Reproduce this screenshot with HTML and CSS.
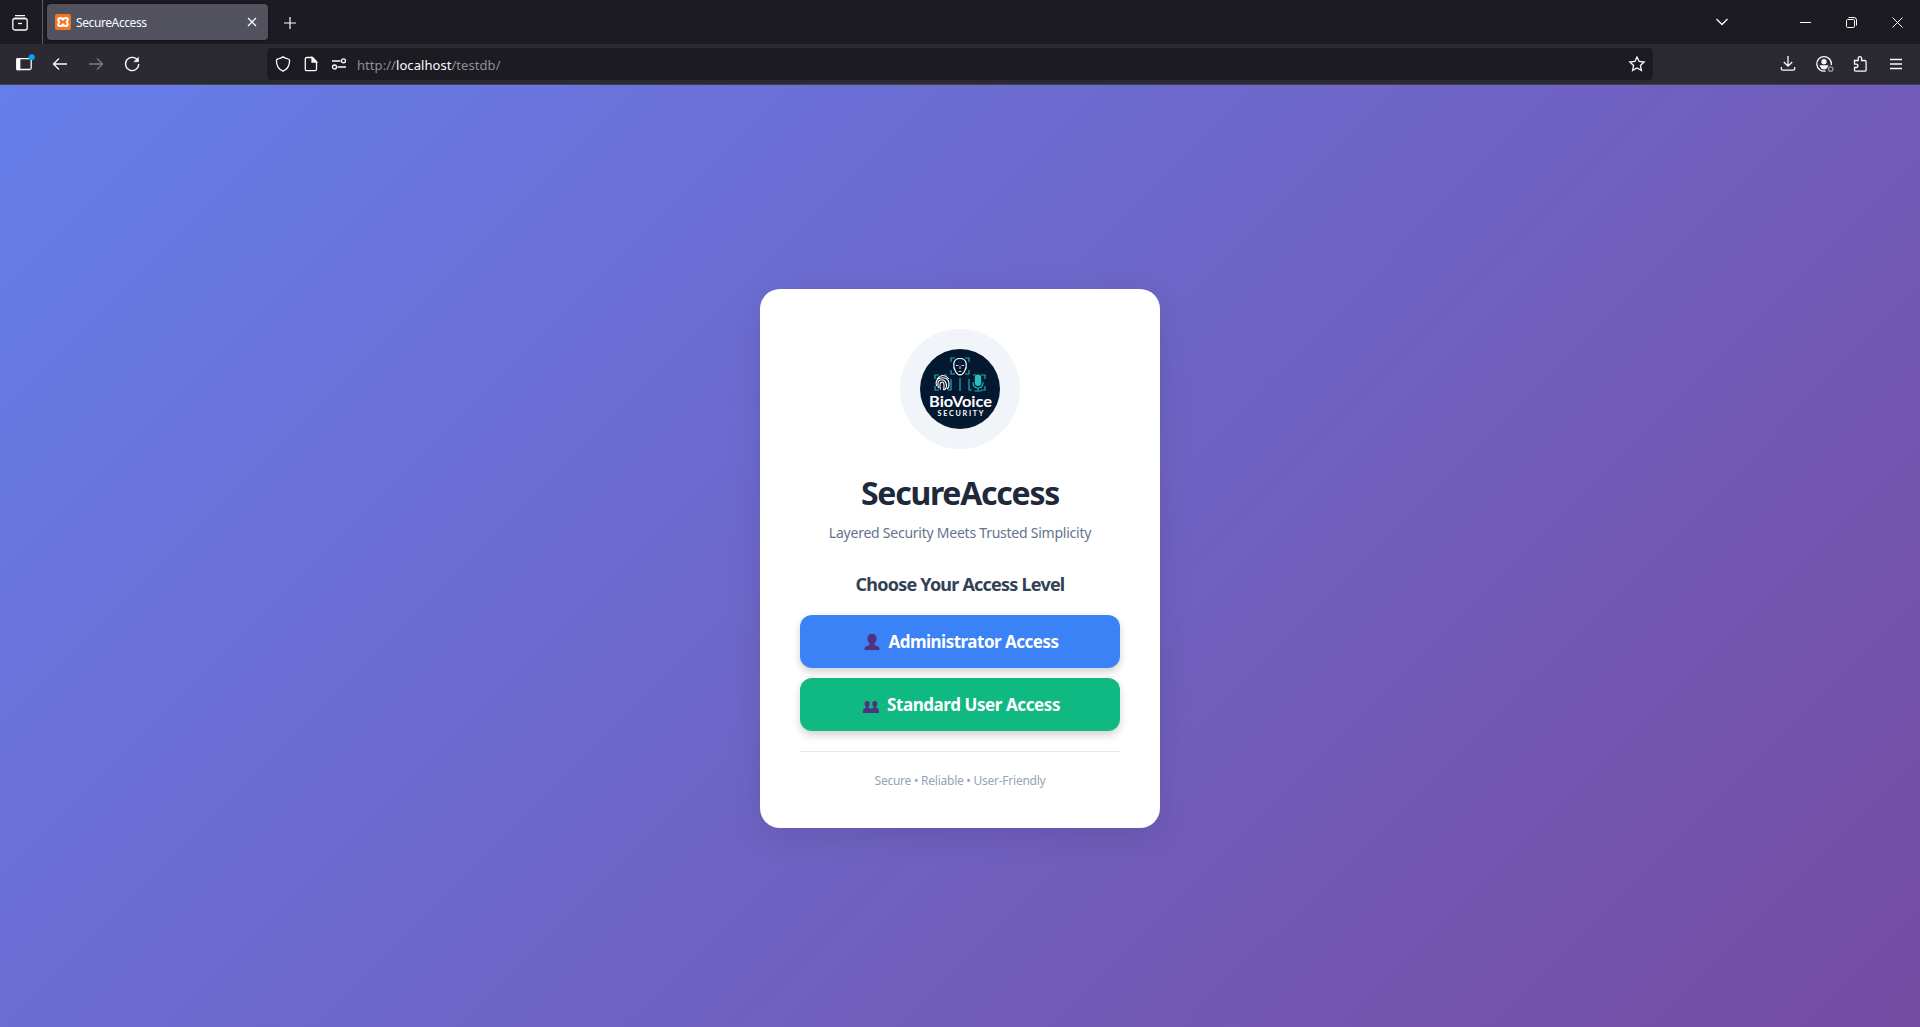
FILE: index.html
```html
<!DOCTYPE html>
<html lang="en">
<head>
<meta charset="utf-8">
<title>SecureAccess</title>
<link rel="stylesheet" href="styles.css">
</head>
<body>
<header class="browser">
  <div class="tabbar">
    <div class="view"><svg class="icon" viewBox="0 0 16 16"><path d="M3 .7h10M2.200 3.500h11.600"/><rect x=".8" y="3.500" width="14.400" height="11.500" rx="2"/><path d="M6 8.500h4"/></svg></div>
    <div class="tab">
      <svg class="favicon" viewBox="0 0 16 16"><rect width="16" height="16" rx="2" fill="#f37623"/><path d="M5.300 4Q8 4 8 6.500 8 4 10.700 4T12.700 6 11 8q1.700.2 1.700 2t-2 2Q8 12 8 9.500 8 12 5.300 12T3.300 10 5 8Q3.300 7.800 3.300 6t2-2z" fill="none" stroke="#fff" stroke-width="2.100"/></svg>
      <span class="tab-title">SecureAccess</span>
      <svg class="tab-close" viewBox="0 0 10 10"><path d="M1 1l8 8M9 1L1 9"/></svg>
    </div>
    <svg class="new-tab" viewBox="0 0 12 12"><path d="M6 0v12M0 6h12"/></svg>
    <div class="window-controls">
      <svg class="chevron" viewBox="0 0 12 8"><path d="M.5 1L6 6.500 11.500 1"/></svg>
      <svg class="minimize" viewBox="0 0 11 11"><path d="M0 5.500h11"/></svg>
      <svg class="restore" viewBox="0 0 11 11"><rect x=".5" y="2.500" width="8" height="8" rx="1"/><path d="M2.500.500H8q2.500 0 2.500 2.500v5.500"/></svg>
      <svg class="close" viewBox="0 0 11 11"><path d="M.5.500l10 10M10.500.500l-10 10"/></svg>
    </div>
  </div>
  <div class="toolbar">
    <div class="nav">
      <svg class="icon" viewBox="0 0 16 16"><rect x=".8" y="2.700" width="14.400" height="10.800" rx="1.500"/><path d="M1 3h2.700v10.500H1z" fill="currentColor"/><circle class="dot" cx="15.700" cy="1.200" r="3"/></svg>
      <svg class="icon" viewBox="0 0 16 16"><path d="M15 8H1.700M7 2.500L1.500 8 7 13.500"/></svg>
      <svg class="icon disabled" viewBox="0 0 16 16"><path d="M1 8h13.300M9 2.500L14.500 8 9 13.500"/></svg>
      <svg class="icon" viewBox="0 0 16 16"><path d="M14 5A6.600 6.600 0 1 0 14.700 8"/><path d="M14.500 1.200v4.600H9.800z" fill="currentColor" stroke-width=".5"/></svg>
    </div>
    <div class="address">
      <svg class="icon" viewBox="0 0 16 16"><path d="M8 .8q1 1 5.200 2.200 1.400.4 1.400 1.800C14.500 10 12 13.500 8 15.200 4 13.500 1.500 10 1.400 4.800 1.400 3.400 2 3.200 2.800 3 7 1.800 8 .8 8 .8z"/></svg>
      <svg class="icon" viewBox="0 0 16 16"><path d="M3.800 1.500h5.700l4 4v7.700q0 1.500-1.500 1.500H3.800q-1.500 0-1.500-1.500V3q0-1.500 1.500-1.500z"/><path d="M9 1.500V6h4.500z" fill="currentColor"/></svg>
      <svg class="icon" viewBox="0 0 16 16"><path d="M1 5h8.500M6.500 11H15"/><circle cx="12.500" cy="4.800" r="2"/><circle cx="3.500" cy="11" r="2"/></svg>
      <span class="url">http://<b>localhost</b>/testdb/</span>
      <svg class="icon star" viewBox="0 0 16 16"><path d="M8 1l2.100 4.500 5 .6-3.700 3.400 1 4.900L8 12l-4.400 2.400 1-4.900L.9 6.100l5-.6z"/></svg>
    </div>
    <div class="actions">
      <svg class="icon" viewBox="0 0 16 16"><path d="M8 0v10M3.800 6L8 10.200 12.200 6M1.300 11v1.500q0 1.700 1.700 1.700h10q1.700 0 1.700-1.700V11"/></svg>
      <svg class="icon" viewBox="0 0 16 16"><path d="M9.500 15A7.300 7.300 0 1 1 15.300 9"/><circle cx="8" cy="5.700" r="2" fill="currentColor"/><path d="M4.500 10h7l-1.500 2.300q-2 1.200-4 0z" fill="currentColor"/><circle class="faded" cx="14.700" cy="13" r="2.200"/></svg>
      <svg class="icon" viewBox="0 0 16 16"><path d="M2.500 4.500h3.700V2.700q0-2 1.700-2t1.700 2v1.800h3q1.500 0 1.500 1.500v8q0 1.200-1.200 1.200H3.700q-1.200 0-1.200-1.200v-2.500h1.700q1.700 0 1.700-1.700T4.200 8.100H2.500z"/></svg>
      <svg class="icon" viewBox="0 0 16 16"><path d="M2 3.500h12M2 8h12M2 12.500h12"/></svg>
    </div>
  </div>
</header>
<main class="page">
  <section class="card">
    <div class="logo-ring">
      <svg class="logo" viewBox="0 0 80 80">
        <circle cx="40" cy="40" r="40" fill="#04182f"/>
        <g fill="none" stroke="#20aeb3" stroke-width="1.200">
          <path d="M31 13V9h4M45 9h4v4M31 21v4h4M45 25h4v-4M15 30v-4h4M24 26h3M15 37v4h4M28 41h3V30M65 30v-4h-4M53 26h3M65 37v4h-4M52 41h-3V30M40 29v13"/>
          <path d="M53 33q0 6 5 6t5-6M58 39v3M54.500 42h7"/>
        </g>
        <rect x="54.800" y="25.500" width="6.400" height="11.500" rx="3.200" fill="#28bfc0"/>
        <g fill="none" stroke="#fff">
          <path d="M40 9.500c8 0 7 9 4.500 13-2.500 4.500-6.500 4.500-9 0C33 18.500 32 9.500 40 9.500z" stroke-width="1.200"/>
          <path d="M36 16.500h2.500M41.500 16.500H44M38.500 22.500h3M40 17v3" stroke-width=".8"/>
          <path d="M17 30q6-7 12 0M16.500 37q-1.500-6 2.500-7.500t7 0q3 1.500 3 5.500t-2 5M18.500 39q-2-7 2-8t5.500 3-1.500 7M20.500 40.500q-1.500-6.500 1-7.300t2.500 3-.5 5" stroke-width="1.100"/>
        </g>
        <text class="logo-name" x="40.500" y="58.300" textLength="63" lengthAdjust="spacingAndGlyphs">BioVoice</text>
        <text class="logo-sub" x="40.500" y="67.200" textLength="46">SECURITY</text>
      </svg>
    </div>
    <h1 class="title">SecureAccess</h1>
    <p class="tagline">Layered Security Meets Trusted Simplicity</p>
    <h2 class="prompt">Choose Your Access Level</h2>
    <div class="choices">
      <a class="button admin"><svg class="person" viewBox="0 0 16 17"><path d="M8 0c3.500 0 4.800 2 4.400 5.500-.2 1.800-1 3-2 4v1.300l3.800 1.700Q15.500 13.500 15.500 16H.5q0-2.500 1.300-3.500l3.800-1.700V9.500c-1-1-1.800-2.200-2-4C3.200 2 4.500 0 8 0z"/></svg><span>Administrator Access</span></a>
      <a class="button user"><svg class="people" viewBox="0 0 16 17"><path d="M4.200 4C6.500 4 7 5.500 6.700 7.500q-.2 1.300-1.200 2v1.200l2.500 1 2.500-1V9.500q-1-.7-1.200-2C9 5.500 9.500 4 11.800 4s2.800 1.500 2.500 3.500q-.2 1.300-1 2v1.200l2 1q.7.600.7 4.300H0q0-3.700.7-4.300l2-1V9.500q-.8-.7-1-2C1.400 5.500 1.900 4 4.200 4z"/></svg><span>Standard User Access</span></a>
    </div>
    <footer class="foot">Secure • Reliable • User-Friendly</footer>
  </section>
</main>
</body>
</html>
```
FILE: styles.css
```css
* { box-sizing: border-box; }
body { margin: 0; height: 1027px; display: flex; flex-direction: column; overflow: hidden; font-family: "Noto Sans", "Open Sans", sans-serif; }
svg { flex: none; fill: none; stroke: currentColor; overflow: visible; }
.browser { height: 85px; flex: none; background: #2b2a33; color: #fbfbfe; border-bottom: 1px solid #42414d; }
.tabbar { height: 44px; background: #1c1b22; display: flex; align-items: center; }
.icon { width: 16px; height: 16px; stroke-width: 1.3; }
.view { width: 43px; height: 44px; padding: 14px 0 0 12px; border-right: 1px solid #5b5b66; }
.tab { width: 221px; height: 36px; margin-left: 4px; padding: 0 11px 0 8px; border-radius: 4px; background: #52525e; display: flex; align-items: center; box-shadow: 0 0 3px #0008; }
.favicon { width: 16px; height: 16px; stroke: none; }
.tab-title { flex: 1; margin-left: 5px; padding-top: 1px; font-size: 12px; letter-spacing: -.4px; }
.tab-close { width: 10px; height: 10px; stroke-width: 1.3; }
.new-tab { width: 12px; height: 12px; margin: 2px 0 0 15.5px; stroke-width: 1.2; }
.window-controls { flex: 1; display: flex; align-items: center; justify-content: flex-end; padding-right: 17px; }
.chevron { width: 12px; height: 8px; margin-right: 72px; stroke-width: 1.3; }
.minimize { width: 11px; height: 11px; margin-right: 35px; }
.restore { width: 11px; height: 11px; margin-right: 35px; }
.close { width: 11px; height: 11px; }
.toolbar { height: 40px; display: flex; align-items: center; }
.nav { width: 267px; padding-left: 16px; display: flex; gap: 20px; }
.disabled { opacity: .4; }
.dot { fill: #00a8f5; stroke: none; }
.address { width: 1386px; height: 32px; border-radius: 4px; background: #1c1b22; padding: 0 8px; display: flex; align-items: center; gap: 12px; }
.url { flex: 1; margin-left: -2px; padding-top: 2px; font-size: 13px; color: #8f8f98; letter-spacing: .06px; }
.url b { font-weight: 400; color: #fbfbfe; }
.actions { flex: 1; display: flex; justify-content: flex-end; gap: 20px; padding-right: 16px; }
.faded { opacity: .55; }
.page { flex: 1; display: flex; align-items: center; justify-content: center; padding-top: 5px; background: linear-gradient(135deg, #667eea 0%, #764ba2 100%); }
.card { width: 400px; height: 539px; padding: 40px; border-radius: 20px; background: #fff; box-shadow: 0 8px 32px rgba(0,0,0,.1); display: flex; flex-direction: column; align-items: center; text-align: center; }
.logo-ring { width: 120px; height: 120px; flex: none; border-radius: 50%; background: #f1f5f9; display: grid; place-items: center; }
.logo { width: 80px; height: 80px; stroke: none; }
.logo-name, .logo-sub { fill: #fff; text-anchor: middle; font-family: Lato, "Noto Sans", sans-serif; font-weight: 700; }
.logo-name { font-size: 16px; }
.logo-sub { font-size: 7.2px; }
.title { margin: 22px 0 0; font-size: 32px; line-height: 43px; letter-spacing: -1.25px; color: #1e293b; white-space: nowrap; }
.tagline { margin: 9px 0 0; font-size: 14px; line-height: 19px; letter-spacing: -.24px; color: #64748b; white-space: nowrap; }
.prompt { margin: 30px 0 0; font-size: 18px; line-height: 24px; letter-spacing: -.78px; color: #334155; white-space: nowrap; }
.choices { align-self: stretch; margin-top: 19px; display: grid; gap: 10px; }
.button { height: 53px; padding-left: 3px; border-radius: 12px; color: #fff; display: flex; align-items: center; justify-content: center; gap: 8px; font-size: 17px; font-weight: 700; white-space: nowrap; box-shadow: 0 4px 8px rgba(0,0,0,.18); }
.admin { background: #3b82f6; letter-spacing: -.5px; }
.user { background: #10b981; letter-spacing: -.42px; }
.person, .people { width: 16px; height: 17px; fill: #523181; stroke: none; }
.person { margin-top: 1px; }
.people { margin-top: 2px; }
.foot { align-self: stretch; margin-top: 20px; padding-top: 21px; border-top: 1px solid #e2e8f0; font-size: 12px; line-height: 16px; letter-spacing: -.25px; color: #94a3b8; }
```
